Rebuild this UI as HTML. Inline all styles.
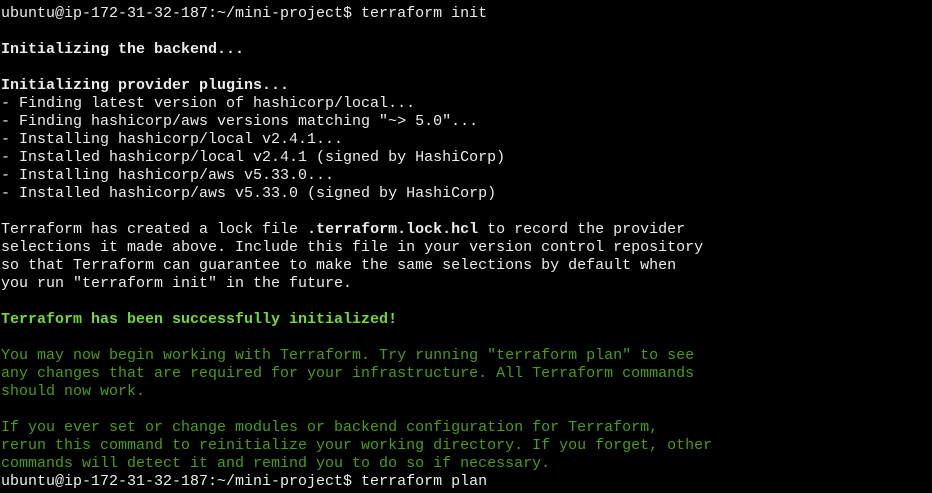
<!DOCTYPE html>
<html><head><meta charset="utf-8"><style>
html,body{margin:0;padding:0;background:#000;width:932px;height:493px;overflow:hidden}
pre{margin:0;padding:5px 0 0 1px;font-family:"Liberation Mono",monospace;font-size:15px;line-height:18px;color:#ececec;white-space:pre}
b{font-weight:bold}
.g{color:#74d83c;font-weight:bold}
.d{color:#4c9c16}
</style></head><body><pre>ubuntu@ip-172-31-32-187:~/mini-project$ terraform init

<b>Initializing the backend...</b>

<b>Initializing provider plugins...</b>
- Finding latest version of hashicorp/local...
- Finding hashicorp/aws versions matching "~&gt; 5.0"...
- Installing hashicorp/local v2.4.1...
- Installed hashicorp/local v2.4.1 (signed by HashiCorp)
- Installing hashicorp/aws v5.33.0...
- Installed hashicorp/aws v5.33.0 (signed by HashiCorp)

Terraform has created a lock file <b>.terraform.lock.hcl</b> to record the provider
selections it made above. Include this file in your version control repository
so that Terraform can guarantee to make the same selections by default when
you run "terraform init" in the future.

<span class="g">Terraform has been successfully initialized!</span>

<span class="d">You may now begin working with Terraform. Try running "terraform plan" to see
any changes that are required for your infrastructure. All Terraform commands
should now work.

If you ever set or change modules or backend configuration for Terraform,
rerun this command to reinitialize your working directory. If you forget, other
commands will detect it and remind you to do so if necessary.</span>
ubuntu@ip-172-31-32-187:~/mini-project$ terraform plan</pre></body></html>
